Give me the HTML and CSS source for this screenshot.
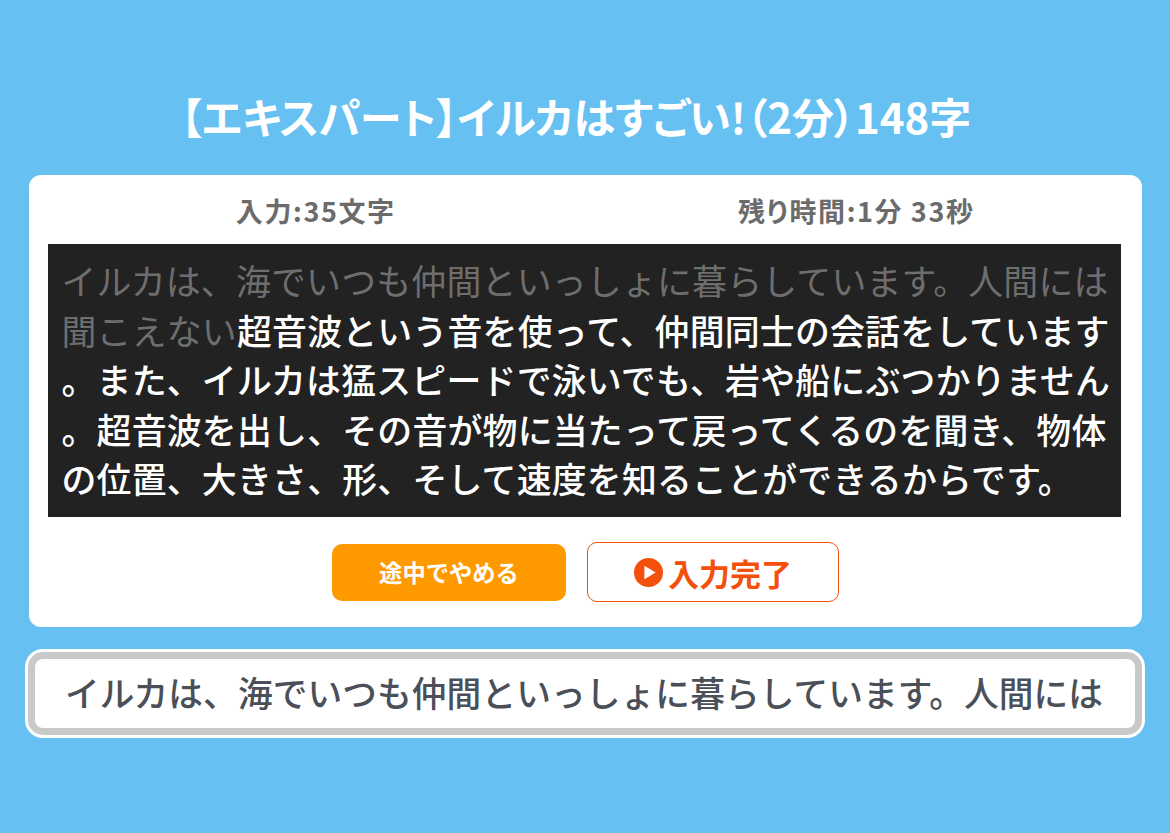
FILE: index.html
```html
<!DOCTYPE html>
<html lang="ja">
<head>
    <meta charset="utf-8">
    <title>タイピング</title>
    <link rel="stylesheet" href="styles.css">
</head>
<body>
    <div class="page">
        <h1 class="title">【エキスパート】イルカはすごい!（2分）148字</h1>
        <div class="card">
            <div class="stats">
                <div class="stat">入力:35文字</div>
                <div class="stat stat-time">残り時間:1分 33秒</div>
            </div>
            <div class="typing-box"><span class="typed">イルカは、海でいつも仲間といっしょに暮らしています。人間には聞こえない</span>超音波という音を使って、仲間同士の会話をしています。また、イルカは猛スピードで泳いでも、岩や船にぶつかりません。超音波を出し、その音が物に当たって戻ってくるのを聞き、物体の位置、大きさ、形、そして速度を知ることができるからです。</div>
            <div class="buttons">
                <div class="btn btn-quit">途中でやめる</div>
                <div class="btn btn-done">
                    <svg class="play" viewBox="0 0 28 28"><circle cx="14" cy="14" r="14" fill="#f4500b"/><path d="M10 7.5 L21 14 L10 20.5 Z" fill="#fff"/></svg>
                    入力完了
                </div>
            </div>
        </div>
        <div class="input-outer">
            <input class="input-line" type="text" value="イルカは、海でいつも仲間といっしょに暮らしています。人間には">
        </div>
    </div>
</body>
</html>
```

FILE: styles.css
```css
* {
    box-sizing: border-box;
}
body {
    margin: 0;
    height: 833px;
    overflow: hidden;
    background-color: #66c1f2;
    font-family: "Noto Sans CJK JP", "Noto Sans", sans-serif;
}
.page {
    display: flex;
    flex-direction: column;
    align-items: center;
    padding-top: 91px;
}
.title {
    margin: 0;
    height: 84px;
    padding-right: 18px;
    color: #fff;
    font-size: 42px;
    font-weight: 700;
    line-height: 50px;
    font-feature-settings: "palt";
    text-align: center;
}
.card {
    width: 1113px;
    height: 452px;
    padding: 14px 21px 0 19px;
    background-color: #fff;
    border-radius: 12px;
}
.stats {
    display: grid;
    grid-template-columns: 1fr 1fr;
    height: 55px;
}
.stat {
    color: #6b6b6b;
    font-size: 27px;
    font-weight: 700;
    line-height: 44px;
    letter-spacing: 1.6px;
    font-feature-settings: "palt";
    text-align: center;
}
.stat-time {
    padding-left: 8px;
}
.typing-box {
    height: 273px;
    padding: 12px 0 0 14px;
    background-color: #222;
    color: #fff;
    font-size: 34.9px;
    font-weight: 500;
    letter-spacing: 0.2px;
    line-height: 49.5px;
    line-break: anywhere;
    word-break: break-all;
}
.typed {
    color: #6e6e6e;
    font-weight: 400;
}
.buttons {
    display: flex;
    justify-content: center;
    align-items: center;
    gap: 21px;
    margin-top: 25px;
    padding-left: 3px;
}
.btn {
    display: flex;
    justify-content: center;
    align-items: center;
    border-radius: 10px;
    font-weight: 700;
}
.btn-quit {
    width: 234px;
    height: 57px;
    background-color: #ff9900;
    color: #fff;
    font-size: 23.3px;
}
.btn-done {
    width: 252px;
    height: 60px;
    gap: 5px;
    background-color: #fff;
    border: 1px solid #f4500b;
    color: #f4500b;
    font-size: 31px;
}
.play {
    width: 29px;
    height: 29px;
}
.input-outer {
    width: 1120px;
    height: 89px;
    margin-top: 22px;
    padding: 3px;
    background-color: #fff;
    border-radius: 18px;
}
.input-line {
    display: block;
    width: 100%;
    height: 100%;
    padding: 0 20px 4px 30px;
    background-color: #fff;
    border: 7px solid #c9c9c9;
    border-radius: 15px;
    outline: none;
    color: #4a4f58;
    font-family: inherit;
    font-size: 34.7px;
    font-weight: 500;
    letter-spacing: 0.1px;
}
```
